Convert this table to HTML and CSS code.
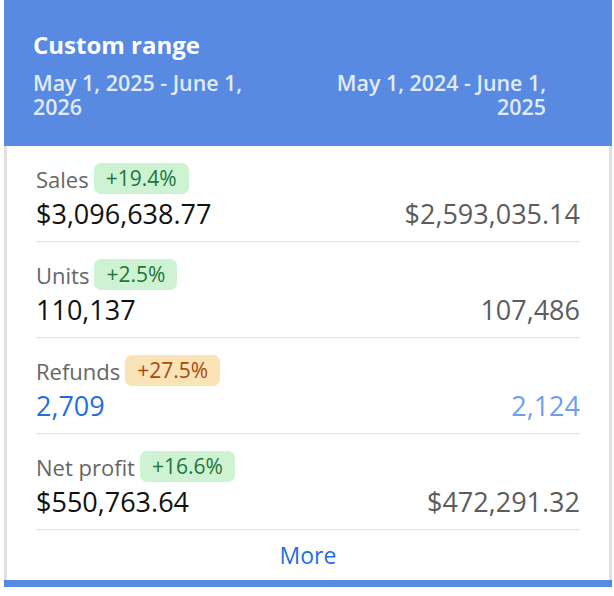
FILE: index.html
```html
<!DOCTYPE html>
<html lang="en">
<head>
<meta charset="utf-8">
<title>Custom range</title>
<link rel="stylesheet" href="styles.css">
</head>
<body>
<div class="card">
  <div class="card-header">
    <div class="title">Custom range</div>
    <div class="dates">
      <div class="date current">May 1, 2025 - June 1, 2026</div>
      <div class="date previous">May 1, 2024 - June 1, 2025</div>
    </div>
  </div>
  <div class="card-body">
    <div class="metric">
      <div class="metric-head"><span class="label">Sales</span><span class="badge good">+19.4%</span></div>
      <div class="metric-values"><span class="now">$3,096,638.77</span><span class="then">$2,593,035.14</span></div>
    </div>
    <div class="metric">
      <div class="metric-head"><span class="label">Units</span><span class="badge good">+2.5%</span></div>
      <div class="metric-values"><span class="now">110,137</span><span class="then">107,486</span></div>
    </div>
    <div class="metric">
      <div class="metric-head"><span class="label">Refunds</span><span class="badge warn">+27.5%</span></div>
      <div class="metric-values link"><span class="now">2,709</span><span class="then">2,124</span></div>
    </div>
    <div class="metric">
      <div class="metric-head"><span class="label">Net profit</span><span class="badge good">+16.6%</span></div>
      <div class="metric-values"><span class="now">$550,763.64</span><span class="then">$472,291.32</span></div>
    </div>
    <div class="more">More</div>
  </div>
</div>
</body>
</html>
```

FILE: styles.css
```css
* { box-sizing: border-box; }
html, body { margin: 0; padding: 0; background: #ffffff; }
body {
  font-family: "Open Sans", "Noto Sans", sans-serif;
  color: #111;
}
.card {
  width: 608px;
  margin-left: 4px;
  background: #fff;
  border-bottom: 7px solid #578ae0;
}
.card-header {
  background: #578ae0;
  padding: 30px 66px 27px 29px;
  color: #fff;
}
.title {
  font-size: 24px;
  font-weight: 700;
  line-height: 30px;
}
.dates {
  margin-top: 11px;
  display: grid;
  grid-template-columns: 1fr 1fr;
  column-gap: 20px;
  color: #e2ebfb;
  font-size: 21.4px;
  font-weight: 600;
  line-height: 24px;
}
.date.previous { text-align: right; }
.card-body {
  border-left: 3px solid #e0e0e0;
  border-right: 3px solid #e0e0e0;
  padding: 0 29px;
}
.metric {
  padding: 17px 0 9px;
  border-bottom: 1px solid #e3e3e3;
}
.metric-head {
  display: flex;
  align-items: center;
  gap: 5px;
  height: 31px;
}
.label {
  font-size: 22px;
  color: #666;
}
.badge {
  font-size: 21px;
  line-height: 31px;
  padding: 0 12px;
  border-radius: 7px;
}
.badge.good { background: #cdf3d3; color: #22753c; }
.badge.warn { background: #fbe3b8; color: #a8490f; }
.metric-values {
  display: flex;
  justify-content: space-between;
  align-items: center;
  height: 38px;
  font-size: 27px;
}
.now { color: #111; }
.then { color: #5c5c5c; }
.metric-values.link .now { color: #1f6fe0; }
.metric-values.link .then { color: #6f9ef0; }
.more {
  text-align: center;
  color: #1f6fe0;
  font-size: 23px;
  line-height: 50px;
}
```
